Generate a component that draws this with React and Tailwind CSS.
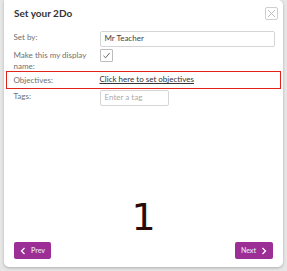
import React from 'react';

function Row({ label, highlight, align = 'items-start', children, className = '' }) {
  return (
    <div
      className={`mx-[2px] flex ${align} px-[6.5px] border-[1.5px] ${highlight ? 'border-[#e2231a]' : 'border-transparent'} ${className}`}
    >
      <div className="w-[86px] shrink-0 pr-[8px] pt-[1px] text-[8px] leading-[11px] text-[#707070]">{label}</div>
      <div className="flex-1 text-[8px] leading-[11px]">{children}</div>
    </div>
  );
}

export default function App() {
  return (
    <div
      className="w-[287px] h-[271px] bg-[#e6e6e6] overflow-hidden pl-[4px] pr-[4px] pb-[4px]"
      style={{ fontFamily: 'Lato, "Open Sans", sans-serif' }}
    >
      <div className="h-full bg-white rounded-b-[5px] rounded-tr-[5px] shadow-[0_1px_3px_rgba(0,0,0,0.25)] flex flex-col">
        {/* Header */}
        <div className="h-[13px] mt-[7px] flex items-center justify-between pl-[10px] pr-[5px]">
          <h1 className="text-[10px] leading-[13px] font-bold text-[#333]">Set your 2Do</h1>
          <button className="w-[13px] h-[13px] border border-[#cfcfcf] rounded-[2px] flex items-center justify-center">
            <svg width="9" height="9" viewBox="0 0 9 9" fill="none" stroke="#b5b5b5" strokeWidth="0.9">
              <path d="M1 1L8 8M8 1L1 8" />
            </svg>
          </button>
        </div>

        {/* Form */}
        <div className="mt-[9.5px] flex flex-col">
          <Row label="Set by:">
            <div className="w-[175px] h-[16px] border border-[#d5d5d5] rounded-[2px] flex items-center pl-[4px] text-[#444]">
              Mr Teacher
            </div>
          </Row>
          <Row label="Make this my display name:" className="h-[23px]">
            <div className="w-[13px] h-[13px] border border-[#bdbdbd] rounded-[1px] flex items-center justify-center">
              <svg width="9" height="9" viewBox="0 0 9 9" fill="none" stroke="#555" strokeWidth="0.9">
                <path d="M1.5 4.8L3.6 6.8L7.6 2" />
              </svg>
            </div>
          </Row>
          <Row label="Objectives:" highlight align="items-center" className="h-[18px]">
            <a className="text-[#333] underline">Click here to set objectives</a>
          </Row>
          <Row label="Tags:">
            <div className="w-[69px] h-[16px] border border-[#d5d5d5] rounded-[2px] flex items-center pl-[4px] text-[#aaa]">
              Enter a tag
            </div>
          </Row>
        </div>

        {/* Step number */}
        <div className="flex-1 flex items-end justify-center pb-[6px]">
          <span
            className="text-[38px] leading-none text-[#2b0a0a]"
            style={{ fontFamily: '"DejaVu Sans", sans-serif' }}
          >
            1
          </span>
        </div>

        {/* Footer */}
        <div className="flex justify-between px-[10px] pb-[8px]">
          <button className="w-[37px] h-[17px] bg-[#9b2f96] rounded-[2px] flex items-center justify-center gap-[5px] text-[7px] font-bold text-[#e5d5e5]">
            <svg width="6" height="8" viewBox="0 0 6 8" fill="none" stroke="#fff" strokeWidth="1.3">
              <path d="M4.5 1L1.5 4L4.5 7" />
            </svg>
            Prev
          </button>
          <button className="w-[38px] h-[17px] bg-[#9b2f96] rounded-[2px] flex items-center justify-center gap-[5px] text-[7px] font-bold text-[#e5d5e5]">
            Next
            <svg width="6" height="8" viewBox="0 0 6 8" fill="none" stroke="#fff" strokeWidth="1.3">
              <path d="M1.5 1L4.5 4L1.5 7" />
            </svg>
          </button>
        </div>
      </div>
    </div>
  );
}
